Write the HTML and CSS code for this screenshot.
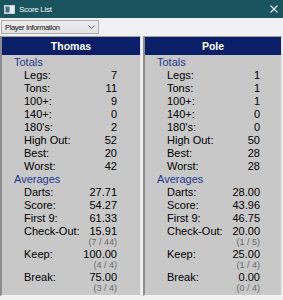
FILE: index.html
```html
<!DOCTYPE html>
<html>
<head>
<meta charset="utf-8">
<link rel="stylesheet" href="styles.css">
</head>
<body>
<div class="titlebar">
  <svg class="appicon" width="11" height="9" viewBox="0 0 11 9">
    <rect x="0.5" y="0.5" width="10" height="8" fill="#e8eef0" stroke="#c8d2d6"/>
    <rect x="1.5" y="1.5" width="4" height="6" fill="#3d6a8a"/>
  </svg>
  <span class="title">Score List</span>
  <svg class="close" width="8" height="8" viewBox="0 0 8 8">
    <path d="M0.5 0.5 L7.5 7.5 M7.5 0.5 L0.5 7.5" stroke="#e6eef0" stroke-width="1.1"/>
  </svg>
</div>
<div class="toolbar">
  <div class="select">
    <span>Player Information</span>
    <svg width="7" height="4" viewBox="0 0 7 4"><path d="M0.5 0.5 L3.5 3.5 L6.5 0.5" fill="none" stroke="#555" stroke-width="0.9"/></svg>
  </div>
</div>
<div class="panels">
  <section class="panel">
    <h2 class="name">Thomas</h2>
    <div class="body">
      <div class="group">Totals</div>
      <div class="row"><span>Legs:</span><span>7</span></div>
      <div class="row"><span>Tons:</span><span>11</span></div>
      <div class="row"><span>100+:</span><span>9</span></div>
      <div class="row"><span>140+:</span><span>0</span></div>
      <div class="row"><span>180's:</span><span>2</span></div>
      <div class="row"><span>High Out:</span><span>52</span></div>
      <div class="row"><span>Best:</span><span>20</span></div>
      <div class="row"><span>Worst:</span><span>42</span></div>
      <div class="group">Averages</div>
      <div class="row"><span>Darts:</span><span>27.71</span></div>
      <div class="row"><span>Score:</span><span>54.27</span></div>
      <div class="row"><span>First 9:</span><span>61.33</span></div>
      <div class="row"><span>Check-Out:</span><span>15.91</span></div>
      <div class="sub">(7 / 44)</div>
      <div class="row"><span>Keep:</span><span>100.00</span></div>
      <div class="sub">(4 / 4)</div>
      <div class="row"><span>Break:</span><span>75.00</span></div>
      <div class="sub">(3 / 4)</div>
    </div>
  </section>
  <section class="panel">
    <h2 class="name">Pole</h2>
    <div class="body">
      <div class="group">Totals</div>
      <div class="row"><span>Legs:</span><span>1</span></div>
      <div class="row"><span>Tons:</span><span>1</span></div>
      <div class="row"><span>100+:</span><span>1</span></div>
      <div class="row"><span>140+:</span><span>0</span></div>
      <div class="row"><span>180's:</span><span>0</span></div>
      <div class="row"><span>High Out:</span><span>50</span></div>
      <div class="row"><span>Best:</span><span>28</span></div>
      <div class="row"><span>Worst:</span><span>28</span></div>
      <div class="group">Averages</div>
      <div class="row"><span>Darts:</span><span>28.00</span></div>
      <div class="row"><span>Score:</span><span>43.96</span></div>
      <div class="row"><span>First 9:</span><span>46.75</span></div>
      <div class="row"><span>Check-Out:</span><span>20.00</span></div>
      <div class="sub">(1 / 5)</div>
      <div class="row"><span>Keep:</span><span>25.00</span></div>
      <div class="sub">(1 / 4)</div>
      <div class="row"><span>Break:</span><span>0.00</span></div>
      <div class="sub">(0 / 4)</div>
    </div>
  </section>
</div>
</body>
</html>
```
FILE: styles.css
```css
html, body {
  margin: 0;
  padding: 0;
  background: #f0f0f0;
  font-family: "Liberation Sans", Arial, sans-serif;
  width: 283px;
  height: 300px;
  overflow: hidden;
}
.titlebar {
  height: 18px;
  background: #1a545e;
  display: flex;
  align-items: center;
  color: #ffffff;
}
.appicon {
  margin-left: 4px;
  margin-right: 4px;
}
.title {
  font-family: "Liberation Sans", sans-serif;
  font-size: 8px;
  letter-spacing: -0.3px;
  color: #f2f6f7;
}
.close {
  margin-left: auto;
  margin-right: 5px;
}
.toolbar {
  height: 18px;
  display: flex;
  align-items: flex-start;
  padding-top: 2px;
  box-sizing: border-box;
}
.select {
  margin-left: 1px;
  width: 98px;
  height: 14px;
  box-sizing: border-box;
  border: 1px solid #adadad;
  background: linear-gradient(#ececec, #e2e2e2);
  display: flex;
  align-items: center;
  justify-content: space-between;
  padding: 0 3px 0 3px;
  font-size: 7.5px;
  letter-spacing: -0.35px;
  color: #111;
}
.panels {
  display: grid;
  grid-template-columns: 141px 139px;
  column-gap: 2px;
}
.panel {
  border-style: solid;
  border-width: 1px 1px 1px 2px;
  border-color: #a0a0a0 #e6e6e6 #f6f6f6 #8c8c8c;
  background: #c8c8c8;
  height: 260px;
  box-sizing: border-box;
}
.name {
  margin: 0;
  height: 18px;
  background: #0b1f68;
  color: #ffffff;
  font-size: 10.5px;
  font-weight: bold;
  line-height: 18px;
  text-align: center;
}
.body {
  padding-top: 1px;
  font-size: 11px;
  color: #000;
}
.group {
  height: 13px;
  line-height: 13px;
  margin-left: 12px;
  color: #25388c;
}
.row {
  height: 13px;
  line-height: 13px;
  margin-left: 22px;
  width: 93px;
  display: flex;
  justify-content: space-between;
}
.sub {
  height: 10px;
  line-height: 9px;
  margin-left: 22px;
  width: 93px;
  text-align: right;
  font-size: 9px;
  color: #6a6a6a;
}
```
